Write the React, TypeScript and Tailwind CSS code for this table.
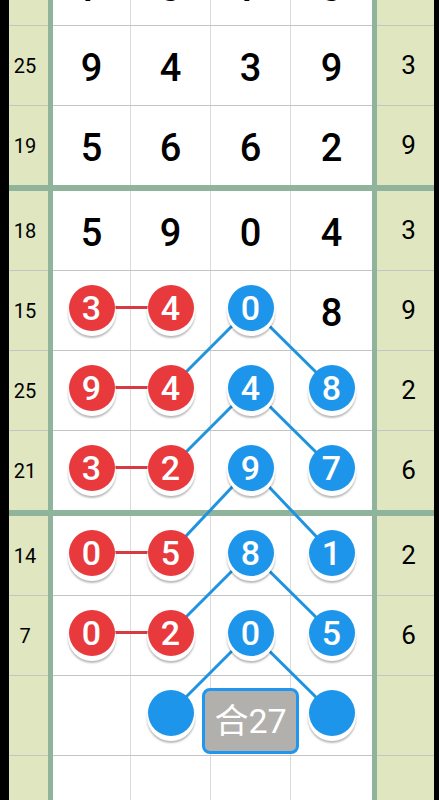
import React from 'react';

type Ball = { n?: string; c: 'r' | 'b' };
type Cell = string | Ball | null;

interface Row {
    left: string;
    right: string;
    cells: Cell[];
    thick?: boolean;
}

const r = (n: string): Ball => ({ n, c: 'r' });
const b = (n?: string): Ball => ({ n, c: 'b' });

const rows: Row[] = [
    { left: '22', right: '5', cells: ['7', '3', '7', '3'] },
    { left: '25', right: '3', cells: ['9', '4', '3', '9'] },
    { left: '19', right: '9', cells: ['5', '6', '6', '2'], thick: true },
    { left: '18', right: '3', cells: ['5', '9', '0', '4'] },
    { left: '15', right: '9', cells: [r('3'), r('4'), b('0'), '8'] },
    { left: '25', right: '2', cells: [r('9'), r('4'), b('4'), b('8')] },
    { left: '21', right: '6', cells: [r('3'), r('2'), b('9'), b('7')], thick: true },
    { left: '14', right: '2', cells: [r('0'), r('5'), b('8'), b('1')] },
    { left: '7', right: '6', cells: [r('0'), r('2'), b('0'), b('5')] },
    { left: '', right: '', cells: [null, b(), 'sum', b()] },
    { left: '', right: '', cells: [null, null, null, null] },
];

const TOP = -54;
const ROW_H = 79;
const colX = [91.5, 170.5, 250.5, 331.5];
const colW = ['w-[77px]', 'w-[80px] border-l', 'w-[80px] border-l', 'w-[82px] border-l'];

// ball centre per row (page coords)
const rowY: number[] = [];
let y = TOP;
rows.forEach((row) => {
    rowY.push(y + ROW_H / 2 - 3);
    y += ROW_H + (row.thick ? 6 : 1);
});

const BallView: React.FC<{ ball: Ball }> = ({ ball }) => (
    <div
        className={`relative z-10 mb-[6px] flex h-[46px] w-[46px] items-center justify-center rounded-full text-[34px] font-medium leading-none text-white shadow-[0_4px_0_1px_#fff,0_6px_2px_1px_rgba(0,0,0,0.28)] ${
            ball.c === 'r' ? 'bg-[#e8393d]' : 'bg-[#1c95ea]'
        }`}
    >
        {ball.n}
    </div>
);

const Links: React.FC = () => {
    const lines: { x1: number; y1: number; x2: number; y2: number; red?: boolean }[] = [];
    for (let i = 4; i <= 8; i++) {
        lines.push({ x1: colX[0], y1: rowY[i], x2: colX[1], y2: rowY[i], red: true });
        lines.push({ x1: colX[2], y1: rowY[i], x2: colX[1], y2: rowY[i + 1] });
        lines.push({ x1: colX[2], y1: rowY[i], x2: colX[3], y2: rowY[i + 1] });
    }
    return (
        <svg className="pointer-events-none absolute left-0 top-0 z-[5]" width={439} height={800}>
            {lines.map((l, i) => (
                <line
                    key={i}
                    x1={l.x1}
                    y1={l.y1}
                    x2={l.x2}
                    y2={l.y2}
                    stroke={l.red ? '#d83a3f' : '#1f93dd'}
                    strokeWidth={3}
                />
            ))}
        </svg>
    );
};

const App: React.FC = () => {
    return (
        <div
            className="relative h-[800px] w-[439px] overflow-hidden bg-black"
            style={{ fontFamily: 'Roboto, "Noto Sans CJK SC", sans-serif' }}
        >
            <div className="ml-[9px] mt-[-54px] w-[425px]">
                {rows.map((row, i) => (
                    <div key={i}>
                        <div className="flex h-[79px]">
                            <div className="flex w-[39px] items-center justify-center bg-[#dfe6c0] pr-[7px] text-[20px] text-black">
                                {row.left}
                            </div>
                            <div className="w-[5px] bg-[#8fb39b]" />
                            {row.cells.map((cell, j) => (
                                <div
                                    key={j}
                                    className={`flex items-center justify-center border-[#dadada] bg-white ${colW[j]}`}
                                >
                                    {typeof cell === 'string' && cell !== 'sum' && (
                                        <span className="mt-[4px] text-[38px] font-medium leading-none text-black">{cell}</span>
                                    )}
                                    {cell === 'sum' && (
                                        <div className="relative z-10 mt-[10px] flex h-[66px] w-[97px] shrink-0 items-center justify-center rounded-[8px] border-[3px] border-[#2196ef] bg-[#b2b0ad] text-[34px] leading-none text-white">
                                            合27
                                        </div>
                                    )}
                                    {cell && typeof cell === 'object' && <BallView ball={cell} />}
                                </div>
                            ))}
                            <div className="w-[5px] bg-[#8fb39b]" />
                            <div className="flex w-[57px] items-center justify-center bg-[#dfe6c0] pl-[6px] text-[26px] text-black">
                                {row.right}
                            </div>
                        </div>
                        {row.thick ? (
                            <div className="h-[6px] bg-[#8fb39b]" />
                        ) : (
                            <div className="flex h-px bg-[#c4c4c4]">
                                <div className="w-[39px]" />
                                <div className="w-[5px] bg-[#8fb39b]" />
                                <div className="w-[319px]" />
                                <div className="w-[5px] bg-[#8fb39b]" />
                            </div>
                        )}
                    </div>
                ))}
            </div>
            <Links />
        </div>
    );
};

export default App;
